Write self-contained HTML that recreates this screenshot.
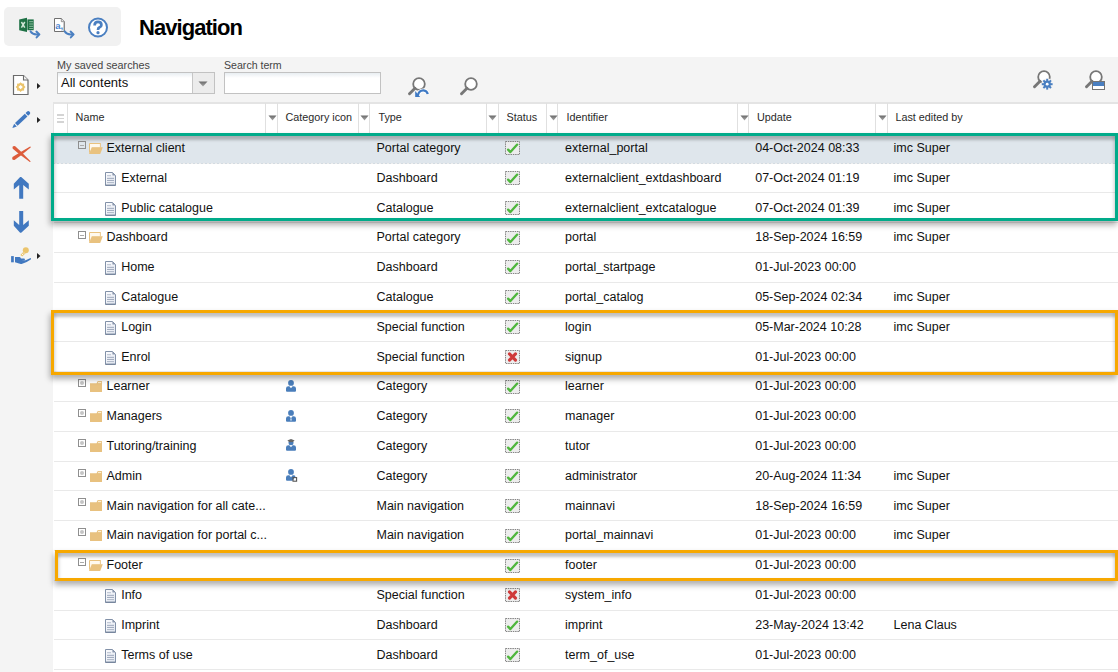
<!DOCTYPE html><html><head><meta charset="utf-8"><style>*{box-sizing:border-box}
html,body{margin:0;padding:0;width:1118px;height:672px;overflow:hidden;background:#fff;font-family:"Liberation Sans", sans-serif;}
.ic{position:absolute;overflow:visible}
.t{position:absolute;white-space:nowrap;color:#111}
.tb{position:absolute;width:8px;height:8px;border:1px solid #8f8f8f;background:transparent}
.hl{position:absolute;border:3px solid;}
</style></head><body><svg width="0" height="0" style="position:absolute"><defs><linearGradient id="ga" x1="0" y1="0" x2="0" y2="1"><stop offset="0" stop-color="#6a6a6a"/><stop offset="1" stop-color="#a8a8a8"/></linearGradient><linearGradient id="gd" x1="0" y1="0" x2="1" y2="1"><stop offset="0" stop-color="#fdfdff"/><stop offset="1" stop-color="#e2e7f0"/></linearGradient></defs></svg><div style="position:absolute;left:4px;top:7px;width:117px;height:39px;background:#f1f1f1;border-radius:5px"></div><svg class="ic" style="left:18px;top:17px" width="24" height="22" viewBox="0 0 24 22" ><path d="M1.2 2.5 L9 0.7 L9 15 L1.2 13.2 Z" fill="#1e7145"/><path d="M3.4 5 L6.8 10.6 M6.8 5 L3.4 10.6" stroke="#cfe5d6" stroke-width="1.5"/><rect x="9.4" y="2.4" width="6.3" height="10.8" fill="#1e7145"/><rect x="11.2" y="4.2" width="4" height="1" fill="#8fbfa0"/><rect x="11.2" y="6.5" width="4" height="1" fill="#8fbfa0"/><rect x="11.2" y="8.8" width="4" height="1" fill="#8fbfa0"/><rect x="11.2" y="11" width="4" height="0.9" fill="#8fbfa0"/><path d="M12.6 14.4 Q14.6 17.9 20.2 17.3" fill="none" stroke="#4a7fc1" stroke-width="2" stroke-linecap="round"/><path d="M18.4 14.6 L21.4 17.4 L18.6 20.4" fill="none" stroke="#4a7fc1" stroke-width="2" stroke-linecap="round" stroke-linejoin="round"/></svg><svg class="ic" style="left:53px;top:17px" width="24" height="22" viewBox="0 0 24 22" ><path d="M1.5 1.5 L8.3 1.5 L11.5 4.7 L11.5 14.5 L1.5 14.5 Z" fill="#fff" stroke="#707070" stroke-width="1"/><path d="M8.3 1.5 L8.3 4.7 L11.5 4.7" fill="#e0e0e0" stroke="#808080" stroke-width="0.8"/><rect x="10.1" y="5" width="1.2" height="9.2" fill="#c4c4c4"/><text x="2.2" y="12.4" font-family="Liberation Sans" font-weight="bold" font-size="9.6" fill="#4d86cf">a,</text><path d="M11.8 14.4 Q13.8 17.9 19.4 17.3" fill="none" stroke="#4a7fc1" stroke-width="2" stroke-linecap="round"/><path d="M17.6 14.6 L20.6 17.4 L17.8 20.4" fill="none" stroke="#4a7fc1" stroke-width="2" stroke-linecap="round" stroke-linejoin="round"/></svg><svg class="ic" style="left:87px;top:17px" width="22" height="22" viewBox="0 0 22 22" ><circle cx="11" cy="10.5" r="9" fill="#fff" stroke="#4a7fc1" stroke-width="2"/><path d="M7.6 8.4 Q7.6 4.9 11 4.9 Q14.4 4.9 14.4 7.9 Q14.4 9.7 12.3 10.6 Q11 11.2 11 12.9" fill="none" stroke="#4a7fc1" stroke-width="2.7"/><circle cx="11" cy="15.7" r="1.6" fill="#4a7fc1"/></svg><div class="t" style="left:139px;top:15px;font-size:22px;line-height:26px;font-weight:bold;color:#000;letter-spacing:-0.95px">Navigation</div><div style="position:absolute;left:0;top:57px;width:1118px;height:615px;background:#f4f4f4"></div><svg class="ic" style="left:8px;top:70px" width="26" height="28" viewBox="0 0 26 28" ><path d="M5.5 5.5 L15.5 5.5 L20 10 L20 24.5 L5.5 24.5 Z" fill="#fff" stroke="#6b6b6b" stroke-width="1.2"/><path d="M15.5 5.5 L15.5 10 L20 10" fill="#f4f4f4" stroke="#6b6b6b" stroke-width="1.1"/><rect x="9.1" y="13.6" width="7" height="7" fill="#ebc46c"/><rect x="9.1" y="13.6" width="7" height="7" fill="#ebc46c" transform="rotate(45 12.6 17.1)"/><path d="M12.6 14.9 L14.8 17.1 L12.6 19.3 L10.4 17.1 Z" fill="#fff"/></svg><svg class="ic" style="left:37px;top:82.5px" width="4" height="6" viewBox="0 0 4 6" ><path d="M0 0 L3.5 3 L0 6 Z" fill="#222"/></svg><svg class="ic" style="left:8px;top:106px" width="26" height="26" viewBox="0 0 26 26" ><g transform="rotate(-43 13 13.9)" fill="#4178c0"><path d="M1 13.9 L5.5 12 L5.5 15.8 Z"/><rect x="6.6" y="12" width="13.4" height="3.8"/><path d="M21 12 L23.2 12 Q24.8 12 24.8 13.9 Q24.8 15.8 23.2 15.8 L21 15.8 Z"/></g></svg><svg class="ic" style="left:37px;top:117px" width="4" height="6" viewBox="0 0 4 6" ><path d="M0 0 L3.5 3 L0 6 Z" fill="#222"/></svg><svg class="ic" style="left:8px;top:140px" width="26" height="26" viewBox="0 0 26 26" ><path d="M4.81 8.86 Q3.6 5.6 7.19 6.14 L13.39 11.97 L22.53 21.22 Q22.6 22.2 21.87 21.98 L11.41 14.23 Z" fill="#dd5c3b"/><path d="M6.51 19.99 Q3.4 20.5 4.49 17.01 L11.42 12.66 L22.12 6.59 Q22.9 6.6 22.68 7.41 L13.1 15.14 Z" fill="#dd5c3b"/></svg><svg class="ic" style="left:8px;top:172px" width="26" height="30" viewBox="0 0 26 30" ><path d="M12.1 4.9 L13.2 4.9 L20.8 11.8 L20.8 17.6 L15.2 13 L15.2 26.8 L11.2 26.8 L11.2 13 L5.8 17.6 L5.8 11.8 Z" fill="#4178c0"/></svg><svg class="ic" style="left:8px;top:206px" width="26" height="30" viewBox="0 0 26 30" ><path d="M11.2 4.9 L15.2 4.9 L15.2 19 L20.8 14.3 L20.8 19.7 L13.2 26.8 L12.1 26.8 L5.8 19.7 L5.8 14.3 L11.2 19 Z" fill="#4178c0"/></svg><svg class="ic" style="left:8px;top:242px" width="30" height="26" viewBox="0 0 30 26" ><circle cx="17.8" cy="8.3" r="3" fill="#ebc46c"/><path d="M15.6 9.6 L17.6 11.2 L14.2 14.6 L12.4 13 Z" fill="#ebc46c"/><circle cx="14.6" cy="12.4" r="0.55" fill="#fff"/><circle cx="16" cy="11" r="0.55" fill="#fff"/><rect x="3.1" y="14.1" width="2.7" height="6.2" fill="#4178c0"/><path d="M7 15.1 L11.3 15.1 Q12.3 15.1 13 16.4 L16.2 16.6 Q17.3 16.9 16.8 17.9 L13.5 18.2 L17.6 18.2 L22.6 16 Q23.4 16.6 22.8 17.4 Q18.2 20.6 14.2 21.8 Q12.6 22.3 11 21.6 L7 20.2 Z" fill="#4178c0"/></svg><svg class="ic" style="left:37px;top:253px" width="4" height="6" viewBox="0 0 4 6" ><path d="M0 0 L3.5 3 L0 6 Z" fill="#222"/></svg><div class="t" style="left:57px;top:57px;font-size:10.8px;line-height:16px;color:#444">My saved searches</div><div class="t" style="left:224px;top:57px;font-size:10.6px;line-height:16px;color:#444">Search term</div><div style="position:absolute;left:57px;top:72px;width:158px;height:22px;border:1px solid #c2c2c2;background:linear-gradient(#e9eef2 0,#fff 5px)"></div><div style="position:absolute;left:192px;top:73px;width:22px;height:20px;border-left:1px solid #c6c6c6;background:#ececec"></div><svg class="ic" style="left:198px;top:81px" width="10" height="6" viewBox="0 0 10 6" ><path d="M0.5 0.5 L9.5 0.5 L5 5.5 Z" fill="url(#ga)"/></svg><div class="t" style="left:61px;top:73px;font-size:13px;line-height:20px;color:#111">All contents</div><div style="position:absolute;left:224px;top:72px;width:157px;height:22px;border:1px solid #c2c2c2;background:linear-gradient(#e9eef2 0,#fff 5px)"></div><svg class="ic" style="left:406px;top:75px" width="24" height="24" viewBox="0 0 24 24" ><circle cx="13" cy="9" r="5.8" fill="#fff" stroke="#777" stroke-width="1.8"/><path d="M9 13.2 L3.5 18.7" stroke="#777" stroke-width="2.9" stroke-linecap="round"/></svg><svg class="ic" style="left:414px;top:86px" width="16" height="12" viewBox="0 0 16 12" ><path d="M3.8 9.5 Q5 4.2 9.5 4.4 Q12.8 4.8 13.8 8" fill="none" stroke="#fff" stroke-width="4"/><path d="M3.8 9.5 Q5 4.2 9.5 4.4 Q12.8 4.8 13.8 8" fill="none" stroke="#3f7ac4" stroke-width="2.3"/><path d="M1.2 5 L6.2 11 L1.2 11 Z" fill="#3f7ac4"/></svg><svg class="ic" style="left:458px;top:75px" width="24" height="24" viewBox="0 0 24 24" ><circle cx="13" cy="9" r="5.8" fill="#fff" stroke="#777" stroke-width="1.8"/><path d="M9 13.2 L3.5 18.7" stroke="#777" stroke-width="2.9" stroke-linecap="round"/></svg><svg class="ic" style="left:1030.5px;top:68px" width="24" height="24" viewBox="0 0 24 24" ><circle cx="13" cy="9" r="5.8" fill="#fff" stroke="#777" stroke-width="1.8"/><path d="M9 13.2 L3.5 18.7" stroke="#777" stroke-width="2.9" stroke-linecap="round"/></svg><svg class="ic" style="left:1041px;top:78px" width="13" height="13" viewBox="0 0 13 13" ><circle cx="6.2" cy="6.2" r="6" fill="#f4f4f4"/><g fill="#4a7fc1"><circle cx="6.2" cy="6.2" r="3.6"/><rect x="5.2" y="0.8" width="2" height="2.6" transform="rotate(0 6.2 6.2)"/><rect x="5.2" y="0.8" width="2" height="2.6" transform="rotate(45 6.2 6.2)"/><rect x="5.2" y="0.8" width="2" height="2.6" transform="rotate(90 6.2 6.2)"/><rect x="5.2" y="0.8" width="2" height="2.6" transform="rotate(135 6.2 6.2)"/><rect x="5.2" y="0.8" width="2" height="2.6" transform="rotate(180 6.2 6.2)"/><rect x="5.2" y="0.8" width="2" height="2.6" transform="rotate(225 6.2 6.2)"/><rect x="5.2" y="0.8" width="2" height="2.6" transform="rotate(270 6.2 6.2)"/><rect x="5.2" y="0.8" width="2" height="2.6" transform="rotate(315 6.2 6.2)"/></g><circle cx="6.2" cy="6.2" r="1.4" fill="#fff"/></svg><svg class="ic" style="left:1083px;top:68px" width="24" height="24" viewBox="0 0 24 24" ><circle cx="13" cy="9" r="5.8" fill="#fff" stroke="#777" stroke-width="1.8"/><path d="M9 13.2 L3.5 18.7" stroke="#777" stroke-width="2.9" stroke-linecap="round"/></svg><div style="position:absolute;left:1092px;top:81px;width:13px;height:9px;border:1px solid #747474;background:linear-gradient(#4a7fc1 0,#4a7fc1 4px,#fff 4px)"></div><div style="position:absolute;left:53px;top:102px;width:1065px;height:570px;background:#fff;border-top:2px solid #e4e4e4"></div><div style="position:absolute;left:53px;top:103px;width:1px;height:30px;background:#e4e4e4"></div><div style="position:absolute;left:67px;top:103px;width:1px;height:30px;background:#e0e0e0"></div><div style="position:absolute;left:265px;top:103px;width:1px;height:30px;background:#e0e0e0"></div><div style="position:absolute;left:277px;top:103px;width:1px;height:30px;background:#e0e0e0"></div><div style="position:absolute;left:358px;top:103px;width:1px;height:30px;background:#e0e0e0"></div><div style="position:absolute;left:369px;top:103px;width:1px;height:30px;background:#e0e0e0"></div><div style="position:absolute;left:486px;top:103px;width:1px;height:30px;background:#e0e0e0"></div><div style="position:absolute;left:498px;top:103px;width:1px;height:30px;background:#e0e0e0"></div><div style="position:absolute;left:546px;top:103px;width:1px;height:30px;background:#e0e0e0"></div><div style="position:absolute;left:557px;top:103px;width:1px;height:30px;background:#e0e0e0"></div><div style="position:absolute;left:737px;top:103px;width:1px;height:30px;background:#e0e0e0"></div><div style="position:absolute;left:748px;top:103px;width:1px;height:30px;background:#e0e0e0"></div><div style="position:absolute;left:875px;top:103px;width:1px;height:30px;background:#e0e0e0"></div><div style="position:absolute;left:887px;top:103px;width:1px;height:30px;background:#e0e0e0"></div><div style="position:absolute;left:57px;top:114px;width:7px;height:1.6px;background:#d4d4d4"></div><div style="position:absolute;left:57px;top:117.6px;width:7px;height:1.6px;background:#d4d4d4"></div><div style="position:absolute;left:57px;top:121.2px;width:7px;height:1.6px;background:#d4d4d4"></div><div class="t" style="left:75.6px;top:107px;font-size:10.8px;line-height:20px;color:#2a2a2a">Name</div><div class="t" style="left:285.5px;top:107px;font-size:10.8px;line-height:20px;color:#2a2a2a">Category icon</div><div class="t" style="left:378.4px;top:107px;font-size:10.8px;line-height:20px;color:#2a2a2a">Type</div><div class="t" style="left:506.6px;top:107px;font-size:10.8px;line-height:20px;color:#2a2a2a">Status</div><div class="t" style="left:566.4px;top:107px;font-size:10.8px;line-height:20px;color:#2a2a2a">Identifier</div><div class="t" style="left:757px;top:107px;font-size:10.8px;line-height:20px;color:#2a2a2a">Update</div><div class="t" style="left:895.4px;top:107px;font-size:10.8px;line-height:20px;color:#2a2a2a">Last edited by</div><svg class="ic" style="left:268px;top:114.5px" width="9" height="6" viewBox="0 0 9 6" ><path d="M0.5 0.5 L8.5 0.5 L4.5 5.5 Z" fill="url(#ga)"/></svg><svg class="ic" style="left:360px;top:114.5px" width="9" height="6" viewBox="0 0 9 6" ><path d="M0.5 0.5 L8.5 0.5 L4.5 5.5 Z" fill="url(#ga)"/></svg><svg class="ic" style="left:488px;top:114.5px" width="9" height="6" viewBox="0 0 9 6" ><path d="M0.5 0.5 L8.5 0.5 L4.5 5.5 Z" fill="url(#ga)"/></svg><svg class="ic" style="left:548.5px;top:114.5px" width="9" height="6" viewBox="0 0 9 6" ><path d="M0.5 0.5 L8.5 0.5 L4.5 5.5 Z" fill="url(#ga)"/></svg><svg class="ic" style="left:739.5px;top:114.5px" width="9" height="6" viewBox="0 0 9 6" ><path d="M0.5 0.5 L8.5 0.5 L4.5 5.5 Z" fill="url(#ga)"/></svg><svg class="ic" style="left:877.5px;top:114.5px" width="9" height="6" viewBox="0 0 9 6" ><path d="M0.5 0.5 L8.5 0.5 L4.5 5.5 Z" fill="url(#ga)"/></svg><div style="position:absolute;left:53px;top:133px;width:1065px;height:30px;background:#dfe6ec"></div><div style="position:absolute;left:53px;top:163px;width:1065px;height:1px;background:repeating-linear-gradient(90deg,#d3dbe2 0,#d3dbe2 2px,#eeeeee 2px,#eeeeee 4px)"></div><div style="position:absolute;left:54px;top:192px;width:1064px;height:1px;background:#e9e9e9"></div><div style="position:absolute;left:54px;top:222px;width:1064px;height:1px;background:#e9e9e9"></div><div style="position:absolute;left:54px;top:252px;width:1064px;height:1px;background:#e9e9e9"></div><div style="position:absolute;left:54px;top:282px;width:1064px;height:1px;background:#e9e9e9"></div><div style="position:absolute;left:54px;top:312px;width:1064px;height:1px;background:#e9e9e9"></div><div style="position:absolute;left:54px;top:341px;width:1064px;height:1px;background:#e9e9e9"></div><div style="position:absolute;left:54px;top:371px;width:1064px;height:1px;background:#e9e9e9"></div><div style="position:absolute;left:54px;top:401px;width:1064px;height:1px;background:#e9e9e9"></div><div style="position:absolute;left:54px;top:431px;width:1064px;height:1px;background:#e9e9e9"></div><div style="position:absolute;left:54px;top:461px;width:1064px;height:1px;background:#e9e9e9"></div><div style="position:absolute;left:54px;top:490px;width:1064px;height:1px;background:#e9e9e9"></div><div style="position:absolute;left:54px;top:520px;width:1064px;height:1px;background:#e9e9e9"></div><div style="position:absolute;left:54px;top:550px;width:1064px;height:1px;background:#e9e9e9"></div><div style="position:absolute;left:54px;top:580px;width:1064px;height:1px;background:#e9e9e9"></div><div style="position:absolute;left:54px;top:610px;width:1064px;height:1px;background:#e9e9e9"></div><div style="position:absolute;left:54px;top:639px;width:1064px;height:1px;background:#e9e9e9"></div><div style="position:absolute;left:54px;top:669px;width:1064px;height:1px;background:#e9e9e9"></div><div class="tb" style="left:78px;top:141px"></div><div style="position:absolute;left:80px;top:144.5px;width:4px;height:1px;background:#aaa"></div><svg class="ic" style="left:89px;top:143px" width="14" height="12" viewBox="0 0 14 12" ><path d="M0 1 Q0 0 1 0 L11.8 0 L11.8 4.5 L2.9 4.5 L0 11.1 Z" fill="#e9c27f"/><path d="M1 0.9 L10.9 0.9 L10.9 4.5 L2.9 4.5 L1 8.8 Z" fill="#fff9ee"/><path d="M2.9 4.2 L13.8 4.2 L11.2 11.1 L0 11.1 Z" fill="#e9c27f"/></svg><div class="t" style="left:106.5px;top:138px;font-size:12.5px;line-height:20px">External client</div><div class="t" style="left:376.5px;top:138px;font-size:12.5px;line-height:20px">Portal category</div><svg class="ic" style="left:505px;top:141px" width="15" height="14" viewBox="0 0 15 14" ><rect x="0.5" y="0.5" width="14" height="13" fill="#ededed" stroke="#858585" stroke-width="1" stroke-dasharray="1.5 0.8"/><path d="M3.1 8.6 L5.4 11.1 L12.2 3.6" fill="none" stroke="#4fb63d" stroke-width="2.3" stroke-linecap="round" stroke-linejoin="round"/></svg><div class="t" style="left:565px;top:138px;font-size:12.5px;line-height:20px">external_portal</div><div class="t" style="left:755.2px;top:138px;font-size:12.5px;line-height:20px">04-Oct-2024 08:33</div><div class="t" style="left:893.6px;top:138px;font-size:12.5px;line-height:20px">imc Super</div><svg class="ic" style="left:105px;top:172px" width="11" height="14" viewBox="0 0 11 14" ><path d="M0.5 0.5 L7.5 0.5 L10.5 3.5 L10.5 13.5 L0.5 13.5 Z" fill="url(#gd)" stroke="#8291a8" stroke-width="1"/><path d="M7.3 0.5 L7.5 3.6 L10.5 3.6 Z" fill="#8b98ad"/><rect x="2" y="3" width="4" height="1.3" fill="#c2c9d6"/><rect x="2" y="5.8" width="7" height="1.1" fill="#a3adc0"/><rect x="2" y="7.9" width="7" height="1.1" fill="#a3adc0"/><rect x="2" y="10" width="7" height="1.1" fill="#b3bccb"/><rect x="0.5" y="12.6" width="10" height="0.9" fill="#6d7d93"/></svg><div class="t" style="left:121.2px;top:168px;font-size:12.5px;line-height:20px">External</div><div class="t" style="left:376.5px;top:168px;font-size:12.5px;line-height:20px">Dashboard</div><svg class="ic" style="left:505px;top:171px" width="15" height="14" viewBox="0 0 15 14" ><rect x="0.5" y="0.5" width="14" height="13" fill="#ededed" stroke="#858585" stroke-width="1" stroke-dasharray="1.5 0.8"/><path d="M3.1 8.6 L5.4 11.1 L12.2 3.6" fill="none" stroke="#4fb63d" stroke-width="2.3" stroke-linecap="round" stroke-linejoin="round"/></svg><div class="t" style="left:565px;top:168px;font-size:12.5px;line-height:20px">externalclient_extdashboard</div><div class="t" style="left:755.2px;top:168px;font-size:12.5px;line-height:20px">07-Oct-2024 01:19</div><div class="t" style="left:893.6px;top:168px;font-size:12.5px;line-height:20px">imc Super</div><svg class="ic" style="left:105px;top:202px" width="11" height="14" viewBox="0 0 11 14" ><path d="M0.5 0.5 L7.5 0.5 L10.5 3.5 L10.5 13.5 L0.5 13.5 Z" fill="url(#gd)" stroke="#8291a8" stroke-width="1"/><path d="M7.3 0.5 L7.5 3.6 L10.5 3.6 Z" fill="#8b98ad"/><rect x="2" y="3" width="4" height="1.3" fill="#c2c9d6"/><rect x="2" y="5.8" width="7" height="1.1" fill="#a3adc0"/><rect x="2" y="7.9" width="7" height="1.1" fill="#a3adc0"/><rect x="2" y="10" width="7" height="1.1" fill="#b3bccb"/><rect x="0.5" y="12.6" width="10" height="0.9" fill="#6d7d93"/></svg><div class="t" style="left:121.2px;top:198px;font-size:12.5px;line-height:20px">Public catalogue</div><div class="t" style="left:376.5px;top:198px;font-size:12.5px;line-height:20px">Catalogue</div><svg class="ic" style="left:505px;top:201px" width="15" height="14" viewBox="0 0 15 14" ><rect x="0.5" y="0.5" width="14" height="13" fill="#ededed" stroke="#858585" stroke-width="1" stroke-dasharray="1.5 0.8"/><path d="M3.1 8.6 L5.4 11.1 L12.2 3.6" fill="none" stroke="#4fb63d" stroke-width="2.3" stroke-linecap="round" stroke-linejoin="round"/></svg><div class="t" style="left:565px;top:198px;font-size:12.5px;line-height:20px">externalclient_extcatalogue</div><div class="t" style="left:755.2px;top:198px;font-size:12.5px;line-height:20px">07-Oct-2024 01:39</div><div class="t" style="left:893.6px;top:198px;font-size:12.5px;line-height:20px">imc Super</div><div class="tb" style="left:78px;top:231px"></div><div style="position:absolute;left:80px;top:234.5px;width:4px;height:1px;background:#aaa"></div><svg class="ic" style="left:89px;top:232px" width="14" height="12" viewBox="0 0 14 12" ><path d="M0 1 Q0 0 1 0 L11.8 0 L11.8 4.5 L2.9 4.5 L0 11.1 Z" fill="#e9c27f"/><path d="M1 0.9 L10.9 0.9 L10.9 4.5 L2.9 4.5 L1 8.8 Z" fill="#fff9ee"/><path d="M2.9 4.2 L13.8 4.2 L11.2 11.1 L0 11.1 Z" fill="#e9c27f"/></svg><div class="t" style="left:106.5px;top:227px;font-size:12.5px;line-height:20px">Dashboard</div><div class="t" style="left:376.5px;top:227px;font-size:12.5px;line-height:20px">Portal category</div><svg class="ic" style="left:505px;top:231px" width="15" height="14" viewBox="0 0 15 14" ><rect x="0.5" y="0.5" width="14" height="13" fill="#ededed" stroke="#858585" stroke-width="1" stroke-dasharray="1.5 0.8"/><path d="M3.1 8.6 L5.4 11.1 L12.2 3.6" fill="none" stroke="#4fb63d" stroke-width="2.3" stroke-linecap="round" stroke-linejoin="round"/></svg><div class="t" style="left:565px;top:227px;font-size:12.5px;line-height:20px">portal</div><div class="t" style="left:755.2px;top:227px;font-size:12.5px;line-height:20px">18-Sep-2024 16:59</div><div class="t" style="left:893.6px;top:227px;font-size:12.5px;line-height:20px">imc Super</div><svg class="ic" style="left:105px;top:261px" width="11" height="14" viewBox="0 0 11 14" ><path d="M0.5 0.5 L7.5 0.5 L10.5 3.5 L10.5 13.5 L0.5 13.5 Z" fill="url(#gd)" stroke="#8291a8" stroke-width="1"/><path d="M7.3 0.5 L7.5 3.6 L10.5 3.6 Z" fill="#8b98ad"/><rect x="2" y="3" width="4" height="1.3" fill="#c2c9d6"/><rect x="2" y="5.8" width="7" height="1.1" fill="#a3adc0"/><rect x="2" y="7.9" width="7" height="1.1" fill="#a3adc0"/><rect x="2" y="10" width="7" height="1.1" fill="#b3bccb"/><rect x="0.5" y="12.6" width="10" height="0.9" fill="#6d7d93"/></svg><div class="t" style="left:121.2px;top:257px;font-size:12.5px;line-height:20px">Home</div><div class="t" style="left:376.5px;top:257px;font-size:12.5px;line-height:20px">Dashboard</div><svg class="ic" style="left:505px;top:260px" width="15" height="14" viewBox="0 0 15 14" ><rect x="0.5" y="0.5" width="14" height="13" fill="#ededed" stroke="#858585" stroke-width="1" stroke-dasharray="1.5 0.8"/><path d="M3.1 8.6 L5.4 11.1 L12.2 3.6" fill="none" stroke="#4fb63d" stroke-width="2.3" stroke-linecap="round" stroke-linejoin="round"/></svg><div class="t" style="left:565px;top:257px;font-size:12.5px;line-height:20px">portal_startpage</div><div class="t" style="left:755.2px;top:257px;font-size:12.5px;line-height:20px">01-Jul-2023 00:00</div><svg class="ic" style="left:105px;top:291px" width="11" height="14" viewBox="0 0 11 14" ><path d="M0.5 0.5 L7.5 0.5 L10.5 3.5 L10.5 13.5 L0.5 13.5 Z" fill="url(#gd)" stroke="#8291a8" stroke-width="1"/><path d="M7.3 0.5 L7.5 3.6 L10.5 3.6 Z" fill="#8b98ad"/><rect x="2" y="3" width="4" height="1.3" fill="#c2c9d6"/><rect x="2" y="5.8" width="7" height="1.1" fill="#a3adc0"/><rect x="2" y="7.9" width="7" height="1.1" fill="#a3adc0"/><rect x="2" y="10" width="7" height="1.1" fill="#b3bccb"/><rect x="0.5" y="12.6" width="10" height="0.9" fill="#6d7d93"/></svg><div class="t" style="left:121.2px;top:287px;font-size:12.5px;line-height:20px">Catalogue</div><div class="t" style="left:376.5px;top:287px;font-size:12.5px;line-height:20px">Catalogue</div><svg class="ic" style="left:505px;top:290px" width="15" height="14" viewBox="0 0 15 14" ><rect x="0.5" y="0.5" width="14" height="13" fill="#ededed" stroke="#858585" stroke-width="1" stroke-dasharray="1.5 0.8"/><path d="M3.1 8.6 L5.4 11.1 L12.2 3.6" fill="none" stroke="#4fb63d" stroke-width="2.3" stroke-linecap="round" stroke-linejoin="round"/></svg><div class="t" style="left:565px;top:287px;font-size:12.5px;line-height:20px">portal_catalog</div><div class="t" style="left:755.2px;top:287px;font-size:12.5px;line-height:20px">05-Sep-2024 02:34</div><div class="t" style="left:893.6px;top:287px;font-size:12.5px;line-height:20px">imc Super</div><svg class="ic" style="left:105px;top:321px" width="11" height="14" viewBox="0 0 11 14" ><path d="M0.5 0.5 L7.5 0.5 L10.5 3.5 L10.5 13.5 L0.5 13.5 Z" fill="url(#gd)" stroke="#8291a8" stroke-width="1"/><path d="M7.3 0.5 L7.5 3.6 L10.5 3.6 Z" fill="#8b98ad"/><rect x="2" y="3" width="4" height="1.3" fill="#c2c9d6"/><rect x="2" y="5.8" width="7" height="1.1" fill="#a3adc0"/><rect x="2" y="7.9" width="7" height="1.1" fill="#a3adc0"/><rect x="2" y="10" width="7" height="1.1" fill="#b3bccb"/><rect x="0.5" y="12.6" width="10" height="0.9" fill="#6d7d93"/></svg><div class="t" style="left:121.2px;top:317px;font-size:12.5px;line-height:20px">Login</div><div class="t" style="left:376.5px;top:317px;font-size:12.5px;line-height:20px">Special function</div><svg class="ic" style="left:505px;top:320px" width="15" height="14" viewBox="0 0 15 14" ><rect x="0.5" y="0.5" width="14" height="13" fill="#ededed" stroke="#858585" stroke-width="1" stroke-dasharray="1.5 0.8"/><path d="M3.1 8.6 L5.4 11.1 L12.2 3.6" fill="none" stroke="#4fb63d" stroke-width="2.3" stroke-linecap="round" stroke-linejoin="round"/></svg><div class="t" style="left:565px;top:317px;font-size:12.5px;line-height:20px">login</div><div class="t" style="left:755.2px;top:317px;font-size:12.5px;line-height:20px">05-Mar-2024 10:28</div><div class="t" style="left:893.6px;top:317px;font-size:12.5px;line-height:20px">imc Super</div><svg class="ic" style="left:105px;top:351px" width="11" height="14" viewBox="0 0 11 14" ><path d="M0.5 0.5 L7.5 0.5 L10.5 3.5 L10.5 13.5 L0.5 13.5 Z" fill="url(#gd)" stroke="#8291a8" stroke-width="1"/><path d="M7.3 0.5 L7.5 3.6 L10.5 3.6 Z" fill="#8b98ad"/><rect x="2" y="3" width="4" height="1.3" fill="#c2c9d6"/><rect x="2" y="5.8" width="7" height="1.1" fill="#a3adc0"/><rect x="2" y="7.9" width="7" height="1.1" fill="#a3adc0"/><rect x="2" y="10" width="7" height="1.1" fill="#b3bccb"/><rect x="0.5" y="12.6" width="10" height="0.9" fill="#6d7d93"/></svg><div class="t" style="left:121.2px;top:347px;font-size:12.5px;line-height:20px">Enrol</div><div class="t" style="left:376.5px;top:347px;font-size:12.5px;line-height:20px">Special function</div><svg class="ic" style="left:505px;top:350px" width="15" height="14" viewBox="0 0 15 14" ><rect x="0.5" y="0.5" width="14" height="13" fill="#ededed" stroke="#858585" stroke-width="1" stroke-dasharray="1.5 0.8"/><path d="M4.5 3.9 L10.5 10.1 M10.5 3.9 L4.5 10.1" fill="none" stroke="#cf3a3a" stroke-width="3.1" stroke-linecap="round"/></svg><div class="t" style="left:565px;top:347px;font-size:12.5px;line-height:20px">signup</div><div class="t" style="left:755.2px;top:347px;font-size:12.5px;line-height:20px">01-Jul-2023 00:00</div><div class="tb" style="left:78px;top:379px"></div><div style="position:absolute;left:80px;top:381px;width:4px;height:4px;border-radius:50%;background:#c4c4c4"></div><svg class="ic" style="left:90px;top:381px" width="12" height="12" viewBox="0 0 12 12" ><path d="M0 2.2 L6.6 2.2 L7.4 0.4 Q7.6 0 8 0 L11.5 0 Q12 0 12 0.5 L12 10.6 Q12 11.1 11.5 11.1 L0.5 11.1 Q0 11.1 0 10.6 Z" fill="#e8c17f"/><rect x="8" y="0.9" width="3.2" height="1.2" fill="#fbeed3"/></svg><div class="t" style="left:106.5px;top:376px;font-size:12.5px;line-height:20px">Learner</div><svg class="ic" style="left:286px;top:380px" width="12" height="13" viewBox="0 0 12 13" ><circle cx="5" cy="2.9" r="2.9" fill="#4a7ebb"/><path d="M0 8.6 Q0 6.2 2.4 6.2 L3.4 6.2 L5 8.2 L6.6 6.2 L7.6 6.2 Q10 6.2 10 8.6 L10 10.8 Q10 11.8 9 11.8 L1 11.8 Q0 11.8 0 10.8 Z" fill="#4a7ebb"/></svg><div class="t" style="left:376.5px;top:376px;font-size:12.5px;line-height:20px">Category</div><svg class="ic" style="left:505px;top:380px" width="15" height="14" viewBox="0 0 15 14" ><rect x="0.5" y="0.5" width="14" height="13" fill="#ededed" stroke="#858585" stroke-width="1" stroke-dasharray="1.5 0.8"/><path d="M3.1 8.6 L5.4 11.1 L12.2 3.6" fill="none" stroke="#4fb63d" stroke-width="2.3" stroke-linecap="round" stroke-linejoin="round"/></svg><div class="t" style="left:565px;top:376px;font-size:12.5px;line-height:20px">learner</div><div class="t" style="left:755.2px;top:376px;font-size:12.5px;line-height:20px">01-Jul-2023 00:00</div><div class="tb" style="left:78px;top:409px"></div><div style="position:absolute;left:80px;top:411px;width:4px;height:4px;border-radius:50%;background:#c4c4c4"></div><svg class="ic" style="left:90px;top:411px" width="12" height="12" viewBox="0 0 12 12" ><path d="M0 2.2 L6.6 2.2 L7.4 0.4 Q7.6 0 8 0 L11.5 0 Q12 0 12 0.5 L12 10.6 Q12 11.1 11.5 11.1 L0.5 11.1 Q0 11.1 0 10.6 Z" fill="#e8c17f"/><rect x="8" y="0.9" width="3.2" height="1.2" fill="#fbeed3"/></svg><div class="t" style="left:106.5px;top:406px;font-size:12.5px;line-height:20px">Managers</div><svg class="ic" style="left:286px;top:410px" width="12" height="13" viewBox="0 0 12 13" ><circle cx="5" cy="2.9" r="2.9" fill="#4a7ebb"/><path d="M0 8.6 Q0 6.2 2.4 6.2 L3.4 6.2 L5 8.2 L6.6 6.2 L7.6 6.2 Q10 6.2 10 8.6 L10 10.8 Q10 11.8 9 11.8 L1 11.8 Q0 11.8 0 10.8 Z" fill="#4a7ebb"/><rect x="4.3" y="8.4" width="1.4" height="2.2" fill="#cfe0f2"/></svg><div class="t" style="left:376.5px;top:406px;font-size:12.5px;line-height:20px">Category</div><svg class="ic" style="left:505px;top:409px" width="15" height="14" viewBox="0 0 15 14" ><rect x="0.5" y="0.5" width="14" height="13" fill="#ededed" stroke="#858585" stroke-width="1" stroke-dasharray="1.5 0.8"/><path d="M3.1 8.6 L5.4 11.1 L12.2 3.6" fill="none" stroke="#4fb63d" stroke-width="2.3" stroke-linecap="round" stroke-linejoin="round"/></svg><div class="t" style="left:565px;top:406px;font-size:12.5px;line-height:20px">manager</div><div class="t" style="left:755.2px;top:406px;font-size:12.5px;line-height:20px">01-Jul-2023 00:00</div><div class="tb" style="left:78px;top:439px"></div><div style="position:absolute;left:80px;top:441px;width:4px;height:4px;border-radius:50%;background:#c4c4c4"></div><svg class="ic" style="left:90px;top:441px" width="12" height="12" viewBox="0 0 12 12" ><path d="M0 2.2 L6.6 2.2 L7.4 0.4 Q7.6 0 8 0 L11.5 0 Q12 0 12 0.5 L12 10.6 Q12 11.1 11.5 11.1 L0.5 11.1 Q0 11.1 0 10.6 Z" fill="#e8c17f"/><rect x="8" y="0.9" width="3.2" height="1.2" fill="#fbeed3"/></svg><div class="t" style="left:106.5px;top:436px;font-size:12.5px;line-height:20px">Tutoring/training</div><svg class="ic" style="left:286px;top:439px" width="12" height="13" viewBox="0 0 12 13" ><circle cx="5" cy="3.7" r="2.5" fill="#4a7ebb"/><path d="M1.2 1.6 L5 0 L8.8 1.6 L5 3 Z" fill="#666"/><rect x="2.6" y="1.6" width="4.8" height="1.5" fill="#666"/><path d="M0 8.6 Q0 6.2 2.4 6.2 L3.4 6.2 L5 8.2 L6.6 6.2 L7.6 6.2 Q10 6.2 10 8.6 L10 10.8 Q10 11.8 9 11.8 L1 11.8 Q0 11.8 0 10.8 Z" fill="#4a7ebb"/></svg><div class="t" style="left:376.5px;top:436px;font-size:12.5px;line-height:20px">Category</div><svg class="ic" style="left:505px;top:439px" width="15" height="14" viewBox="0 0 15 14" ><rect x="0.5" y="0.5" width="14" height="13" fill="#ededed" stroke="#858585" stroke-width="1" stroke-dasharray="1.5 0.8"/><path d="M3.1 8.6 L5.4 11.1 L12.2 3.6" fill="none" stroke="#4fb63d" stroke-width="2.3" stroke-linecap="round" stroke-linejoin="round"/></svg><div class="t" style="left:565px;top:436px;font-size:12.5px;line-height:20px">tutor</div><div class="t" style="left:755.2px;top:436px;font-size:12.5px;line-height:20px">01-Jul-2023 00:00</div><div class="tb" style="left:78px;top:469px"></div><div style="position:absolute;left:80px;top:471px;width:4px;height:4px;border-radius:50%;background:#c4c4c4"></div><svg class="ic" style="left:90px;top:471px" width="12" height="12" viewBox="0 0 12 12" ><path d="M0 2.2 L6.6 2.2 L7.4 0.4 Q7.6 0 8 0 L11.5 0 Q12 0 12 0.5 L12 10.6 Q12 11.1 11.5 11.1 L0.5 11.1 Q0 11.1 0 10.6 Z" fill="#e8c17f"/><rect x="8" y="0.9" width="3.2" height="1.2" fill="#fbeed3"/></svg><div class="t" style="left:106.5px;top:466px;font-size:12.5px;line-height:20px">Admin</div><svg class="ic" style="left:286px;top:469px" width="12" height="13" viewBox="0 0 12 13" ><circle cx="5" cy="2.9" r="2.9" fill="#4a7ebb"/><path d="M0 8.6 Q0 6.2 2.4 6.2 L3.4 6.2 L5 8.2 L6.6 6.2 L7.6 6.2 Q9 6.2 9.5 7.2 L6.5 11.8 L1 11.8 Q0 11.8 0 10.8 Z" fill="#4a7ebb"/><rect x="7" y="8.6" width="3.6" height="3.6" fill="none" stroke="#555" stroke-width="1.1"/></svg><div class="t" style="left:376.5px;top:466px;font-size:12.5px;line-height:20px">Category</div><svg class="ic" style="left:505px;top:469px" width="15" height="14" viewBox="0 0 15 14" ><rect x="0.5" y="0.5" width="14" height="13" fill="#ededed" stroke="#858585" stroke-width="1" stroke-dasharray="1.5 0.8"/><path d="M3.1 8.6 L5.4 11.1 L12.2 3.6" fill="none" stroke="#4fb63d" stroke-width="2.3" stroke-linecap="round" stroke-linejoin="round"/></svg><div class="t" style="left:565px;top:466px;font-size:12.5px;line-height:20px">administrator</div><div class="t" style="left:755.2px;top:466px;font-size:12.5px;line-height:20px">20-Aug-2024 11:34</div><div class="t" style="left:893.6px;top:466px;font-size:12.5px;line-height:20px">imc Super</div><div class="tb" style="left:78px;top:498px"></div><div style="position:absolute;left:80px;top:500px;width:4px;height:4px;border-radius:50%;background:#c4c4c4"></div><svg class="ic" style="left:90px;top:500px" width="12" height="12" viewBox="0 0 12 12" ><path d="M0 2.2 L6.6 2.2 L7.4 0.4 Q7.6 0 8 0 L11.5 0 Q12 0 12 0.5 L12 10.6 Q12 11.1 11.5 11.1 L0.5 11.1 Q0 11.1 0 10.6 Z" fill="#e8c17f"/><rect x="8" y="0.9" width="3.2" height="1.2" fill="#fbeed3"/></svg><div class="t" style="left:106.5px;top:496px;font-size:12.5px;line-height:20px">Main navigation for all cate...</div><div class="t" style="left:376.5px;top:496px;font-size:12.5px;line-height:20px">Main navigation</div><svg class="ic" style="left:505px;top:499px" width="15" height="14" viewBox="0 0 15 14" ><rect x="0.5" y="0.5" width="14" height="13" fill="#ededed" stroke="#858585" stroke-width="1" stroke-dasharray="1.5 0.8"/><path d="M3.1 8.6 L5.4 11.1 L12.2 3.6" fill="none" stroke="#4fb63d" stroke-width="2.3" stroke-linecap="round" stroke-linejoin="round"/></svg><div class="t" style="left:565px;top:496px;font-size:12.5px;line-height:20px">mainnavi</div><div class="t" style="left:755.2px;top:496px;font-size:12.5px;line-height:20px">18-Sep-2024 16:59</div><div class="t" style="left:893.6px;top:496px;font-size:12.5px;line-height:20px">imc Super</div><div class="tb" style="left:78px;top:528px"></div><div style="position:absolute;left:80px;top:530px;width:4px;height:4px;border-radius:50%;background:#c4c4c4"></div><svg class="ic" style="left:90px;top:530px" width="12" height="12" viewBox="0 0 12 12" ><path d="M0 2.2 L6.6 2.2 L7.4 0.4 Q7.6 0 8 0 L11.5 0 Q12 0 12 0.5 L12 10.6 Q12 11.1 11.5 11.1 L0.5 11.1 Q0 11.1 0 10.6 Z" fill="#e8c17f"/><rect x="8" y="0.9" width="3.2" height="1.2" fill="#fbeed3"/></svg><div class="t" style="left:106.5px;top:525px;font-size:12.5px;line-height:20px">Main navigation for portal c...</div><div class="t" style="left:376.5px;top:525px;font-size:12.5px;line-height:20px">Main navigation</div><svg class="ic" style="left:505px;top:529px" width="15" height="14" viewBox="0 0 15 14" ><rect x="0.5" y="0.5" width="14" height="13" fill="#ededed" stroke="#858585" stroke-width="1" stroke-dasharray="1.5 0.8"/><path d="M3.1 8.6 L5.4 11.1 L12.2 3.6" fill="none" stroke="#4fb63d" stroke-width="2.3" stroke-linecap="round" stroke-linejoin="round"/></svg><div class="t" style="left:565px;top:525px;font-size:12.5px;line-height:20px">portal_mainnavi</div><div class="t" style="left:755.2px;top:525px;font-size:12.5px;line-height:20px">01-Jul-2023 00:00</div><div class="t" style="left:893.6px;top:525px;font-size:12.5px;line-height:20px">imc Super</div><div class="tb" style="left:78px;top:558px"></div><div style="position:absolute;left:80px;top:561.5px;width:4px;height:1px;background:#aaa"></div><svg class="ic" style="left:89px;top:560px" width="14" height="12" viewBox="0 0 14 12" ><path d="M0 1 Q0 0 1 0 L11.8 0 L11.8 4.5 L2.9 4.5 L0 11.1 Z" fill="#e9c27f"/><path d="M1 0.9 L10.9 0.9 L10.9 4.5 L2.9 4.5 L1 8.8 Z" fill="#fff9ee"/><path d="M2.9 4.2 L13.8 4.2 L11.2 11.1 L0 11.1 Z" fill="#e9c27f"/></svg><div class="t" style="left:106.5px;top:555px;font-size:12.5px;line-height:20px">Footer</div><svg class="ic" style="left:505px;top:559px" width="15" height="14" viewBox="0 0 15 14" ><rect x="0.5" y="0.5" width="14" height="13" fill="#ededed" stroke="#858585" stroke-width="1" stroke-dasharray="1.5 0.8"/><path d="M3.1 8.6 L5.4 11.1 L12.2 3.6" fill="none" stroke="#4fb63d" stroke-width="2.3" stroke-linecap="round" stroke-linejoin="round"/></svg><div class="t" style="left:565px;top:555px;font-size:12.5px;line-height:20px">footer</div><div class="t" style="left:755.2px;top:555px;font-size:12.5px;line-height:20px">01-Jul-2023 00:00</div><svg class="ic" style="left:105px;top:589px" width="11" height="14" viewBox="0 0 11 14" ><path d="M0.5 0.5 L7.5 0.5 L10.5 3.5 L10.5 13.5 L0.5 13.5 Z" fill="url(#gd)" stroke="#8291a8" stroke-width="1"/><path d="M7.3 0.5 L7.5 3.6 L10.5 3.6 Z" fill="#8b98ad"/><rect x="2" y="3" width="4" height="1.3" fill="#c2c9d6"/><rect x="2" y="5.8" width="7" height="1.1" fill="#a3adc0"/><rect x="2" y="7.9" width="7" height="1.1" fill="#a3adc0"/><rect x="2" y="10" width="7" height="1.1" fill="#b3bccb"/><rect x="0.5" y="12.6" width="10" height="0.9" fill="#6d7d93"/></svg><div class="t" style="left:121.2px;top:585px;font-size:12.5px;line-height:20px">Info</div><div class="t" style="left:376.5px;top:585px;font-size:12.5px;line-height:20px">Special function</div><svg class="ic" style="left:505px;top:588px" width="15" height="14" viewBox="0 0 15 14" ><rect x="0.5" y="0.5" width="14" height="13" fill="#ededed" stroke="#858585" stroke-width="1" stroke-dasharray="1.5 0.8"/><path d="M4.5 3.9 L10.5 10.1 M10.5 3.9 L4.5 10.1" fill="none" stroke="#cf3a3a" stroke-width="3.1" stroke-linecap="round"/></svg><div class="t" style="left:565px;top:585px;font-size:12.5px;line-height:20px">system_info</div><div class="t" style="left:755.2px;top:585px;font-size:12.5px;line-height:20px">01-Jul-2023 00:00</div><svg class="ic" style="left:105px;top:619px" width="11" height="14" viewBox="0 0 11 14" ><path d="M0.5 0.5 L7.5 0.5 L10.5 3.5 L10.5 13.5 L0.5 13.5 Z" fill="url(#gd)" stroke="#8291a8" stroke-width="1"/><path d="M7.3 0.5 L7.5 3.6 L10.5 3.6 Z" fill="#8b98ad"/><rect x="2" y="3" width="4" height="1.3" fill="#c2c9d6"/><rect x="2" y="5.8" width="7" height="1.1" fill="#a3adc0"/><rect x="2" y="7.9" width="7" height="1.1" fill="#a3adc0"/><rect x="2" y="10" width="7" height="1.1" fill="#b3bccb"/><rect x="0.5" y="12.6" width="10" height="0.9" fill="#6d7d93"/></svg><div class="t" style="left:121.2px;top:615px;font-size:12.5px;line-height:20px">Imprint</div><div class="t" style="left:376.5px;top:615px;font-size:12.5px;line-height:20px">Dashboard</div><svg class="ic" style="left:505px;top:618px" width="15" height="14" viewBox="0 0 15 14" ><rect x="0.5" y="0.5" width="14" height="13" fill="#ededed" stroke="#858585" stroke-width="1" stroke-dasharray="1.5 0.8"/><path d="M3.1 8.6 L5.4 11.1 L12.2 3.6" fill="none" stroke="#4fb63d" stroke-width="2.3" stroke-linecap="round" stroke-linejoin="round"/></svg><div class="t" style="left:565px;top:615px;font-size:12.5px;line-height:20px">imprint</div><div class="t" style="left:755.2px;top:615px;font-size:12.5px;line-height:20px">23-May-2024 13:42</div><div class="t" style="left:893.6px;top:615px;font-size:12.5px;line-height:20px">Lena Claus</div><svg class="ic" style="left:105px;top:649px" width="11" height="14" viewBox="0 0 11 14" ><path d="M0.5 0.5 L7.5 0.5 L10.5 3.5 L10.5 13.5 L0.5 13.5 Z" fill="url(#gd)" stroke="#8291a8" stroke-width="1"/><path d="M7.3 0.5 L7.5 3.6 L10.5 3.6 Z" fill="#8b98ad"/><rect x="2" y="3" width="4" height="1.3" fill="#c2c9d6"/><rect x="2" y="5.8" width="7" height="1.1" fill="#a3adc0"/><rect x="2" y="7.9" width="7" height="1.1" fill="#a3adc0"/><rect x="2" y="10" width="7" height="1.1" fill="#b3bccb"/><rect x="0.5" y="12.6" width="10" height="0.9" fill="#6d7d93"/></svg><div class="t" style="left:121.2px;top:645px;font-size:12.5px;line-height:20px">Terms of use</div><div class="t" style="left:376.5px;top:645px;font-size:12.5px;line-height:20px">Dashboard</div><svg class="ic" style="left:505px;top:648px" width="15" height="14" viewBox="0 0 15 14" ><rect x="0.5" y="0.5" width="14" height="13" fill="#ededed" stroke="#858585" stroke-width="1" stroke-dasharray="1.5 0.8"/><path d="M3.1 8.6 L5.4 11.1 L12.2 3.6" fill="none" stroke="#4fb63d" stroke-width="2.3" stroke-linecap="round" stroke-linejoin="round"/></svg><div class="t" style="left:565px;top:645px;font-size:12.5px;line-height:20px">term_of_use</div><div class="t" style="left:755.2px;top:645px;font-size:12.5px;line-height:20px">01-Jul-2023 00:00</div><div class="hl" style="left:51px;top:133px;width:1067px;height:88px;border-color:#00ab8a;box-shadow:-1px 4px 6px rgba(0,0,0,0.32), inset 0 5px 3px -1px rgba(0,0,0,0.24), inset 4px 0 3px -2px rgba(0,0,0,0.1), inset -4px 0 3px -2px rgba(0,0,0,0.1)"></div><div class="hl" style="left:51px;top:310px;width:1067px;height:64.5px;border-color:#f7a800;box-shadow:-1px 4px 6px rgba(0,0,0,0.32), inset 0 5px 3px -1px rgba(0,0,0,0.24), inset 4px 0 3px -2px rgba(0,0,0,0.1), inset -4px 0 3px -2px rgba(0,0,0,0.1)"></div><div class="hl" style="left:55px;top:550px;width:1063px;height:31px;border-color:#f7a800;box-shadow:-1px 4px 6px rgba(0,0,0,0.32), inset 0 5px 3px -1px rgba(0,0,0,0.24), inset 4px 0 3px -2px rgba(0,0,0,0.1), inset -4px 0 3px -2px rgba(0,0,0,0.1)"></div></body></html>
